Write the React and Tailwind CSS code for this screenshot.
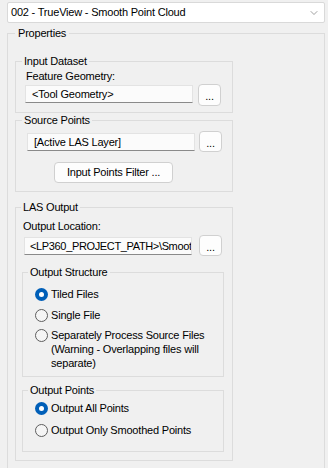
import { ChevronDown } from 'lucide-react';

function GroupBox({ title, className, legendClass, children }) {
    return (
        <fieldset className={`border border-[#dcdcdc] ${className}`}>
            <legend className={`leading-[13px] ${legendClass}`}>{title}</legend>
            {children}
        </fieldset>
    );
}

function PathField({ value, className }) {
    return (
        <div className={`h-[18px] w-[168px] bg-[#fbfbfb] border border-[#e3e3e3] border-b-[#8a8a8a] leading-[16px] whitespace-nowrap overflow-hidden ${className}`}>
            {value}
        </div>
    );
}

function DotsButton({ className }) {
    return (
        <button className={`w-[23px] bg-[#fdfdfd] border border-[#d0d0d0] rounded-[4px] flex items-center justify-center pt-[3px] ${className}`}>
            ...
        </button>
    );
}

function Radio({ checked, label, className }) {
    return (
        <div className={`flex items-start gap-[3px] ${className}`}>
            {checked ? (
                <span className="mt-[1px] w-[13px] h-[13px] rounded-full bg-[#005fb8] flex items-center justify-center shrink-0">
                    <span className="w-[5px] h-[5px] rounded-full bg-white" />
                </span>
            ) : (
                <span className="mt-[1px] w-[13px] h-[13px] rounded-full border border-[#5e5e5e] bg-[#f5f5f5] shrink-0" />
            )}
            <span className="leading-[14px]">{label}</span>
        </div>
    );
}

export default function App() {
    return (
        <div className="w-[328px] h-[468px] overflow-hidden bg-[#f0f0f0] text-[11px] tracking-[-0.2px] text-black font-['Liberation_Sans',Arial,sans-serif]">
            {/* Tool selector */}
            <div className="ml-[7px] mt-[2px] w-[318px] h-[21px] bg-white border border-[#d9d9d9] rounded-[2px] flex items-center justify-between pl-[3px] pr-[4px]">
                <span>002 - TrueView - Smooth Point Cloud</span>
                <ChevronDown size={12} strokeWidth={1.2} className="text-[#606060]" />
            </div>

            <GroupBox title="Properties" className="ml-[7px] mt-[4px] w-[318px] pl-[7px] pt-[15px] pb-[30px]" legendClass="px-[3px]">
                {/* Input Dataset */}
                <GroupBox title="Input Dataset" className="w-[218px] pl-[6px] pt-[2px] pb-[6px]" legendClass="px-[2px]">
                    <div className="ml-[4px] leading-[13px]">Feature Geometry:</div>
                    <div className="flex items-start mt-[1px]">
                        <PathField value="<Tool Geometry>" className="ml-[3px] mt-[1px] pl-[6px]" />
                        <DotsButton className="ml-[5px] h-[22px]" />
                    </div>
                </GroupBox>

                {/* Source Points */}
                <GroupBox title="Source Points" className="mt-[1px] w-[218px] pl-[6px] pt-[4px] pb-[8px]" legendClass="px-[2px]">
                    <div className="flex items-start">
                        <PathField value="[Active LAS Layer]" className="ml-[5px] mt-[2px] pl-[6px]" />
                        <DotsButton className="ml-[4px] h-[21px]" />
                    </div>
                    <button className="ml-[32px] mt-[10px] w-[119px] h-[21px] bg-[#fdfdfd] border border-[#d0d0d0] rounded-[4px] leading-[13px]">
                        Input Points Filter ...
                    </button>
                </GroupBox>

                {/* LAS Output */}
                <GroupBox title="LAS Output" className="mt-[9px] w-[218px] pl-[5px] pt-[6px] pb-[8px]" legendClass="px-[2px]">
                    <div className="ml-[2px] leading-[13px]">Output Location:</div>
                    <div className="flex items-start mt-[2px]">
                        <PathField value="<LP360_PROJECT_PATH>\Smoot" className="ml-[3px] mt-[2px] pl-[5px] tracking-[-0.35px]" />
                        <DotsButton className="ml-[7px] h-[21px]" />
                    </div>

                    <GroupBox title="Output Structure" className="ml-[1px] mt-[10px] w-[202px] pl-[5px] pt-[8px] pb-[6px]" legendClass="px-[2px]">
                        <Radio checked label="Tiled Files" className="ml-[7px]" />
                        <Radio label="Single File" className="ml-[7px] mt-[7px]" />
                        <Radio
                            label={<>Separately Process Source Files<br />(Warning - Overlapping files will<br />separate)</>}
                            className="ml-[7px] mt-[6px]"
                        />
                    </GroupBox>

                    <GroupBox title="Output Points" className="ml-[1px] mt-[7px] w-[202px] pl-[5px] pt-[4px] pb-[14px]" legendClass="px-[2px]">
                        <Radio checked label="Output All Points" className="ml-[7px]" />
                        <Radio label="Output Only Smoothed Points" className="ml-[7px] mt-[8px]" />
                    </GroupBox>
                </GroupBox>
            </GroupBox>
        </div>
    );
}
